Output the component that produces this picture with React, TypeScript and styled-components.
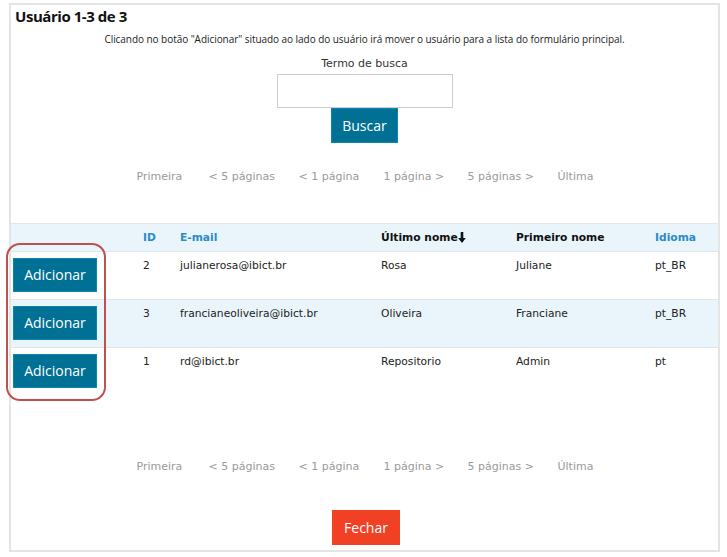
import React from "react";
import styled, { createGlobalStyle } from "styled-components";

const GlobalStyle = createGlobalStyle`
  html, body { margin: 0; padding: 0; background: #ffffff; }
  body { font-family: "Open Sans", "Liberation Sans", sans-serif; color: #222; }
`;

const Page = styled.div`
  padding: 3px 7px 5px 9px;
`;

const Box = styled.div`
  position: relative;
  height: 545px;
  border: 2px solid #e4e4e4;
  display: flex;
  flex-direction: column;
  align-items: stretch;
`;

const Title = styled.h2`
  margin: 0;
  padding: 1px 0 0 4px;
  font-family: "Open Sans", sans-serif;
  font-size: 15px;
  font-weight: 700;
  letter-spacing: -0.45px;
  line-height: 20px;
  color: #111;
`;

const Instruction = styled.p`
  margin: 6px 0 0;
  text-align: center;
  font-family: "Open Sans", sans-serif;
  font-size: 10px;
  letter-spacing: -0.05px;
  line-height: 14px;
  color: #222;
`;

const SearchForm = styled.div`
  display: flex;
  flex-direction: column;
  align-items: center;
  margin-top: 11px;
`;

const Label = styled.label`
  font-family: "DejaVu Sans", sans-serif;
  font-size: 11px;
  line-height: 14px;
  color: #333;
`;

const Input = styled.input`
  box-sizing: border-box;
  width: 176px;
  height: 34px;
  margin-top: 3px;
  border: 1px solid #cccccc;
  background: #fff;
  padding: 0 6px;
  outline: none;
`;

const Button = styled.button<{ $tone?: "primary" | "alert"; $w?: number }>`
  box-sizing: border-box;
  width: ${(p) => (p.$w ? `${p.$w}px` : "auto")};
  border: 1px solid ${(p) => (p.$tone === "alert" ? "#f04124" : "#0a86b0")};
  background: ${(p) => (p.$tone === "alert" ? "#f04124" : "#007095")};
  color: #fff;
  font-family: "Open Sans", sans-serif;
  font-size: 14px;
  line-height: 1;
  height: 35px;
  padding: 0;
  cursor: pointer;
`;

const Pager = styled.nav<{ $top: number }>`
  display: flex;
  justify-content: center;
  margin-top: ${(p) => p.$top}px;
  padding-left: 3px;
`;

const PageLink = styled.span<{ $w: number }>`
  width: ${(p) => p.$w}px;
  font-family: "DejaVu Sans", sans-serif;
  font-size: 11px;
  line-height: 14px;
  color: #9a9a9a;
  white-space: nowrap;
`;

const TableWrap = styled.div`
  position: relative;
  margin-top: 39px;
`;

const Grid = styled.div`
  display: grid;
  grid-template-columns: 126px 37px 201px 135px 139px 1fr;
`;

const HeadCell = styled.div<{ $link?: boolean }>`
  background: #e9f5fb;
  border-top: 1px solid #e2e8ea;
  border-bottom: 1px solid #dfe7eb;
  height: 27px;
  padding: 0 6px;
  display: flex;
  align-items: center;
  font-family: "DejaVu Sans", sans-serif;
  font-weight: 700;
  font-size: 10.7px;
  color: ${(p) => (p.$link ? "#2b8cc4" : "#111")};
  white-space: nowrap;
`;

const Cell = styled.div<{ $alt: boolean; $last: boolean }>`
  background: ${(p) => (p.$alt ? "#eaf5fb" : "#fff")};
  border-bottom: ${(p) => (p.$last ? "none" : "1px solid #dfe6ea")};
  height: 48px;
  padding: 7px 6px 0;
  box-sizing: border-box;
  font-family: "DejaVu Sans", sans-serif;
  font-size: 10.7px;
  line-height: 14px;
  color: #222;
  white-space: nowrap;
`;

const ActionCell = styled(Cell)`
  padding: 6px 0 0 2px;
`;

const AddButton = styled(Button)`
  width: 84px;
  height: 34px;
`;

const Highlight = styled.div`
  position: absolute;
  left: -5px;
  top: 20px;
  width: 100px;
  height: 158px;
  box-sizing: border-box;
  border: 2.5px solid #c0504d;
  border-radius: 14px;
  pointer-events: none;
`;

const Footer = styled.div`
  display: flex;
  justify-content: center;
  margin-top: 36px;
  padding-left: 3px;
`;

const Arrow = () => (
  <svg width="8" height="11" viewBox="0 0 8 11">
    <path d="M2.7 0h2.6v6h2.5L4 11 0.2 6h2.5z" fill="#111" />
  </svg>
);

const pages: [string, number][] = [
  ["Primeira", 72],
  ["< 5 páginas", 90],
  ["< 1 página", 85],
  ["1 página >", 84],
  ["5 páginas >", 90],
  ["Última", 38],
];

const users = [
  { id: "2", email: "julianerosa@ibict.br", last: "Rosa", first: "Juliane", lang: "pt_BR" },
  { id: "3", email: "francianeoliveira@ibict.br", last: "Oliveira", first: "Franciane", lang: "pt_BR" },
  { id: "1", email: "rd@ibict.br", last: "Repositorio", first: "Admin", lang: "pt" },
];

const Pagination = ({ top }: { top: number }) => (
  <Pager $top={top}>
    {pages.map(([t, w]) => (
      <PageLink key={t} $w={w}>
        {t}
      </PageLink>
    ))}
  </Pager>
);

export default function App() {
  return (
    <>
      <GlobalStyle />
      <Page>
        <Box>
          <Title>Usuário 1-3 de 3</Title>
          <Instruction>
            Clicando no botão "Adicionar" situado ao lado do usuário irá mover o usuário para a lista do formulário principal.
          </Instruction>
          <SearchForm>
            <Label>Termo de busca</Label>
            <Input type="text" />
            <Button $w={67}>Buscar</Button>
          </SearchForm>
          <Pagination top={27} />
          <TableWrap>
            <Grid>
              <HeadCell />
              <HeadCell $link>ID</HeadCell>
              <HeadCell $link>E-mail</HeadCell>
              <HeadCell>
                Último nome
                <Arrow />
              </HeadCell>
              <HeadCell>Primeiro nome</HeadCell>
              <HeadCell $link>Idioma</HeadCell>
              {users.map((u, i) => {
                const alt = i === 1;
                const last = i === users.length - 1;
                return (
                  <React.Fragment key={u.id}>
                    <ActionCell $alt={alt} $last={last}>
                      <AddButton>Adicionar</AddButton>
                    </ActionCell>
                    <Cell $alt={alt} $last={last}>{u.id}</Cell>
                    <Cell $alt={alt} $last={last}>{u.email}</Cell>
                    <Cell $alt={alt} $last={last}>{u.last}</Cell>
                    <Cell $alt={alt} $last={last}>{u.first}</Cell>
                    <Cell $alt={alt} $last={last}>{u.lang}</Cell>
                  </React.Fragment>
                );
              })}
            </Grid>
            <Highlight />
          </TableWrap>
          <Pagination top={64} />
          <Footer>
            <Button $tone="alert" $w={68}>Fechar</Button>
          </Footer>
        </Box>
      </Page>
    </>
  );
}
